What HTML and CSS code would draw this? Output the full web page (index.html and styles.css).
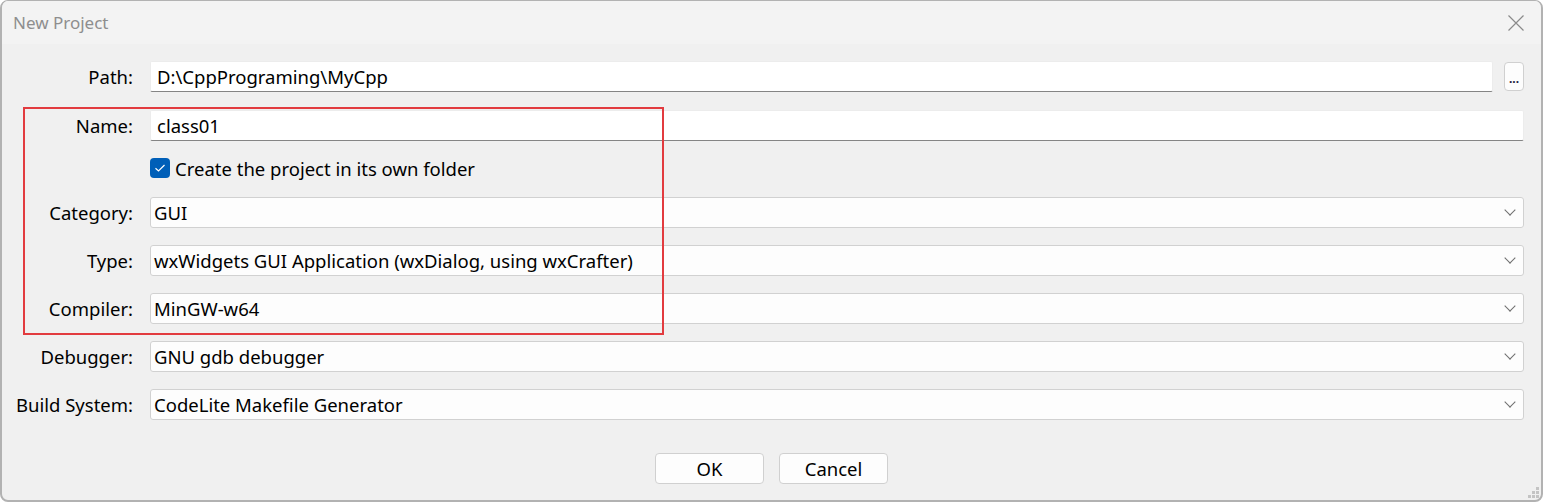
FILE: index.html
```html
<!DOCTYPE html>
<html>
	<head>
		<meta charset="UTF-8">
		<title>New Project</title>
		<link rel="stylesheet" href="styles.css">
	</head>
	<body>
		<div class="window">
			<div class="titlebar">
				<span class="title">New Project</span>
				<svg class="close" width="16" height="16" viewBox="0 0 16 16">
					<path d="M0.5 0.5 L15.5 15.5 M15.5 0.5 L0.5 15.5" stroke="#8a8a8a" stroke-width="1.2" fill="none"/>
				</svg>
			</div>

			<div class="form">
				<label class="lbl">Path:</label>
				<div class="path-row">
					<div class="text-input">D:\CppPrograming\MyCpp</div>
					<div class="browse">...</div>
				</div>

				<label class="lbl">Name:</label>
				<div class="text-input">class01</div>

				<span></span>
				<div class="check-row">
					<span class="checkbox">
						<svg width="12" height="10" viewBox="0 0 12 10">
							<path d="M1.5 5.2 L4.5 8 L10.5 2" stroke="#fff" stroke-width="1.2" fill="none"/>
						</svg>
					</span>
					<span>Create the project in its own folder</span>
				</div>

				<label class="lbl">Category:</label>
				<div class="select">GUI<i class="chev"></i></div>

				<label class="lbl">Type:</label>
				<div class="select">wxWidgets GUI Application (wxDialog, using wxCrafter)<i class="chev"></i></div>

				<label class="lbl">Compiler:</label>
				<div class="select">MinGW-w64<i class="chev"></i></div>

				<label class="lbl">Debugger:</label>
				<div class="select">GNU gdb debugger<i class="chev"></i></div>

				<label class="lbl">Build System:</label>
				<div class="select">CodeLite Makefile Generator<i class="chev"></i></div>
			</div>

			<div class="buttons">
				<button class="btn">OK</button>
				<button class="btn">Cancel</button>
			</div>

			<div class="highlight"></div>
			<div class="grip"></div>
		</div>
	</body>
</html>
```

FILE: styles.css
```css
* {
	margin: 0;
	padding: 0;
	box-sizing: border-box;
}

body {
	background: #ffffff;
	font-family: "Noto Sans", "Open Sans", sans-serif;
	font-size: 18.5px;
	color: #000;
}

.window {
	position: relative;
	width: 1543px;
	height: 502px;
	background: #f0f0f0;
	border: 2px solid #b2b2b2;
	border-top-width: 1px;
	border-radius: 8px;
	overflow: hidden;
}

.titlebar {
	height: 43px;
	background: #f3f3f3;
	display: flex;
	align-items: center;
	justify-content: space-between;
	padding: 0 17px 0 11px;
}

.title {
	font-size: 17px;
	color: #8e8e8e;
}

/* form grid: label column + control column */
.form {
	display: grid;
	grid-template-columns: 121px 1fr;
	column-gap: 17px;
	row-gap: 17px;
	padding: 17px 17px 0 10px;
}

.lbl {
	text-align: right;
	height: 31px;
	line-height: 31px;
	white-space: nowrap;
}

.path-row {
	display: flex;
	gap: 11px;
	margin-bottom: 1px;
}

.text-input {
	flex: 1;
	height: 31px;
	line-height: 30px;
	padding-left: 6px;
	background: #ffffff;
	border: 1px solid #ececec;
	border-bottom-color: #858585;
	border-radius: 2px;
}

.browse {
	width: 20px;
	height: 29px;
	margin-top: 1px;
	background: #fdfdfd;
	border: 1px solid #d0d0d0;
	border-radius: 4px;
	font-size: 12px;
	font-weight: bold;
	line-height: 32px;
	text-align: center;
	color: #1a1a40;
}

.check-row {
	display: flex;
	align-items: center;
	gap: 5px;
	height: 22px;
	margin: -1px 0 1px;
}

.checkbox {
	width: 20px;
	height: 20px;
	background: #005fb8;
	border-radius: 4px;
	display: flex;
	align-items: center;
	justify-content: center;
}

.select {
	position: relative;
	height: 31px;
	line-height: 29px;
	padding-left: 3px;
	background: #fdfdfd;
	border: 1px solid #d1d1d1;
	border-radius: 3px;
}

.chev {
	position: absolute;
	right: 9px;
	top: 8px;
	width: 8px;
	height: 8px;
	border-right: 1px solid #6e6e6e;
	border-bottom: 1px solid #6e6e6e;
	transform: rotate(45deg);
}

.buttons {
	display: flex;
	justify-content: center;
	gap: 15px;
	margin-top: 33px;
}

.btn {
	width: 109px;
	height: 31px;
	background: #fdfdfd;
	border: 1px solid #d0d0d0;
	border-radius: 4px;
	font-family: "Noto Sans", "Open Sans", sans-serif;
	font-size: 18.5px;
	color: #000;
}

/* red annotation box drawn over the dialog */
.highlight {
	position: absolute;
	left: 21px;
	top: 106px;
	width: 641px;
	height: 228px;
	border: 2px solid #e23b3f;
}

.grip {
	position: absolute;
	right: 2px;
	bottom: 2px;
	width: 11px;
	height: 11px;
	background:
		linear-gradient(#c4c4c4, #c4c4c4) 8px 0 / 3px 3px no-repeat,
		linear-gradient(#c4c4c4, #c4c4c4) 4px 4px / 3px 3px no-repeat,
		linear-gradient(#c4c4c4, #c4c4c4) 8px 4px / 3px 3px no-repeat,
		linear-gradient(#c4c4c4, #c4c4c4) 0 8px / 3px 3px no-repeat,
		linear-gradient(#c4c4c4, #c4c4c4) 4px 8px / 3px 3px no-repeat,
		linear-gradient(#c4c4c4, #c4c4c4) 8px 8px / 3px 3px no-repeat;
}
```
